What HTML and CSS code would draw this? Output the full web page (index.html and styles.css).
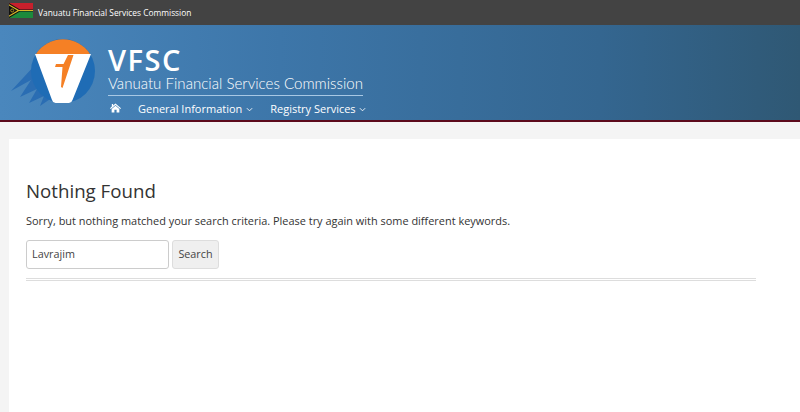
FILE: index.html
```html
<!DOCTYPE html>
<html>
  <head>
    <meta charset="utf-8">
    <meta name="viewport" content="width=device-width, initial-scale=1.0">
    <title>Vanuatu Financial Services Commission</title>
    <link rel="stylesheet" href="styles.css">
  </head>
  <body>
  <div class="topbar">
    <svg class="flag" viewBox="0 0 24 15" width="24" height="15">
      <rect width="24" height="7.5" fill="#c8202c"/>
      <rect y="7.5" width="24" height="7.5" fill="#1c8a3c"/>
      <path d="M0 0L11 6.600H24V8.400H11L0 15Z" fill="#111"/>
      <path d="M0 1.200L10 7L24 7V8L10 8L0 13.800Z" fill="#d8b828"/>
      <path d="M0 2.400L8.400 7.500L0 12.600Z" fill="#111"/>
      <circle cx="3.200" cy="7.500" r="1.500" fill="none" stroke="#d8b828" stroke-width=".7"/>
    </svg>
    <span>Vanuatu Financial Services Commission</span>
  </div>
  <header class="masthead">
    <svg class="logo" viewBox="0 0 92 75" width="92" height="75">
      <path d="M27 30L3 56L23 45L12 62L29 54L21 68L36 61L32 71L48 60Z" fill="#2a6db3"/>
      <circle cx="55" cy="36" r="32" fill="#1f6cb5"/>
      <path d="M28 19a32 32 0 0 1 54 0Z" fill="#f58025"/>
      <path d="M27 19H83L64.500 65a4 4 0 0 1-3.500 3H47.500a4 4 0 0 1-3.500-3Z" fill="#fff"/>
      <path d="M60 20H65.500L54.500 53L53 52L54.500 32H47L48 29H55.500Z" fill="#f58025"/>
    </svg>
    <div class="brand">
      <h1>VFSC</h1>
      <p>Vanuatu Financial Services Commission</p>
      <nav>
        <a href="#" class="home"><svg viewBox="0 0 12 10" width="11" height="10"><path d="M6 0L12 5.200L11.200 6L6 1.600L.8 6L0 5.200L2 3.400V.6H3.400V2.200ZM6 2.600L10.200 6.200V10H7.200V7H4.800V10H1.800V6.200Z" fill="#fff"/></svg></a>
        <a href="#">General Information <svg class="caret" viewBox="0 0 8 5" width="7" height="5"><path d="M1 1L4 4L7 1" fill="none" stroke="#fff" stroke-width="1"/></svg></a>
        <a href="#">Registry Services <svg class="caret" viewBox="0 0 8 5" width="7" height="5"><path d="M1 1L4 4L7 1" fill="none" stroke="#fff" stroke-width="1"/></svg></a>
      </nav>
    </div>
  </header>
  <main>
    <h2>Nothing Found</h2>
    <p>Sorry, but nothing matched your search criteria. Please try again with some different keywords.</p>
    <form class="search">
      <input type="text" value="Lavrajim">
      <button type="button">Search</button>
    </form>
    <hr>
  </main>
  </body>
</html>
```

FILE: styles.css
```css
* {
  box-sizing: border-box;
  margin: 0;
}

html, body {
  height: 412px;
  overflow: hidden;
}

body {
  font-family: "Open Sans", Arial, sans-serif;
  background: #f4f4f4;
  color: #333;
}

.topbar {
  display: flex;
  align-items: center;
  height: 25px;
  padding-left: 9px;
  background: #434343;
  color: #fff;
  font-size: 8.4px;
  gap: 5px;
}

.flag {
  margin-top: -4px;
}

.masthead {
  display: flex;
  height: 97px;
  padding-left: 8px;
  background: linear-gradient(90deg, #4a87bd 0%, #3d76a9 35%, #346690 75%, #2f5874 100%);
  border-bottom: 2px solid #5c0a1c;
}

.logo {
  margin-top: 10px;
}

.brand {
  margin-left: 8px;
  color: #fff;
}

.brand h1 {
  font-size: 29px;
  font-weight: 600;
  line-height: 30px;
  margin-top: 20px;
  letter-spacing: 1.500px;
}

.brand p {
  font-family: Lato, sans-serif;
  font-size: 15.100px;
  font-weight: 300;
  line-height: 17px;
  width: 255px;
  padding-bottom: 3px;
  border-bottom: 1px solid #a8c8e4;
  white-space: nowrap;
}

nav {
  display: flex;
  align-items: center;
  gap: 17px;
  height: 24px;
  padding-left: 2px;
  font-size: 11px;
}

nav a {
  color: #fff;
  text-decoration: none;
  white-space: nowrap;
}

.caret {
  margin-left: 1px;
  vertical-align: 1px;
}

main {
  margin: 17px 0 0 9px;
  height: 280px;
  padding: 39px 44px 0 17px;
  background: #fff;
}

h2 {
  font-size: 18.700px;
  font-weight: 400;
  line-height: 25px;
  color: #333;
}

main p {
  font-size: 10.950px;
  line-height: 15px;
  margin-top: 10px;
  color: #333;
}

.search {
  display: flex;
  gap: 3px;
  margin-top: 12px;
}

.search input {
  width: 143px;
  height: 29px;
  padding: 0 5px 2px;
  border: 1px solid #ccc;
  border-radius: 3px;
  font: 10.800px "Open Sans", sans-serif;
  color: #444;
}

.search button {
  width: 47px;
  height: 29px;
  padding: 0 0 2px;
  border: 1px solid #ddd;
  border-radius: 3px;
  background: #efefef;
  font: 10.800px "Open Sans", sans-serif;
  color: #444;
}

hr {
  margin-top: 9px;
  height: 3px;
  border: 0;
  border-top: 1px solid #ddd;
  border-bottom: 1px solid #ddd;
}
```
